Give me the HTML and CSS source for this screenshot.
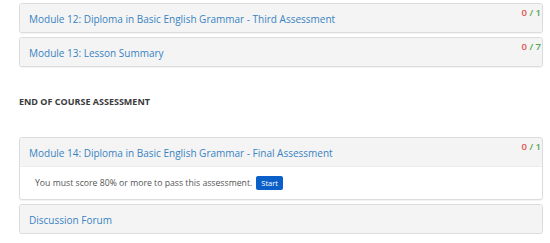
FILE: index.html
```html
<!DOCTYPE html>
<html>
<head>
<meta charset="utf-8">
<link rel="stylesheet" href="styles.css">
</head>
<body>
<div class="page">
  <div class="panel">
    <div class="panel-heading">
      <a class="title" href="#">Module 12: Diploma in Basic English Grammar - Third Assessment</a>
      <span class="score"><span class="bad">0</span> <span class="good">/ 1</span></span>
    </div>
  </div>
  <div class="panel">
    <div class="panel-heading">
      <a class="title" href="#">Module 13: Lesson Summary</a>
      <span class="score"><span class="bad">0</span> <span class="good">/ 7</span></span>
    </div>
  </div>

  <h4 class="section">END OF COURSE ASSESSMENT</h4>

  <div class="panel">
    <div class="panel-heading">
      <a class="title" href="#">Module 14: Diploma in Basic English Grammar - Final Assessment</a>
      <span class="score"><span class="bad">0</span> <span class="good">/ 1</span></span>
    </div>
    <div class="panel-body">
      You must score 80% or more to pass this assessment. <a class="btn" href="#">Start</a>
    </div>
  </div>
  <div class="panel">
    <div class="panel-heading">
      <a class="title" href="#">Discussion Forum</a>
    </div>
  </div>
</div>
</body>
</html>
```
FILE: styles.css
```css
html, body {
  margin: 0;
  padding: 0;
  background: #fff;
}
body {
  font-family: "Open Sans", "Noto Sans", sans-serif;
  font-size: 10px;
  color: #444;
}
.page {
  width: 524px;
  padding: 3px 0 0 19px;
  display: flex;
  flex-direction: column;
  gap: 4px;
}
.panel {
  border: 1px solid #dcdcdc;
  border-radius: 3px;
  background: #fff;
  box-shadow: 0 1px 1px rgba(0,0,0,0.05);
}
.panel-heading {
  position: relative;
  background: #f4f4f4;
  height: 28px;
  padding: 0 9px;
  display: flex;
  align-items: center;
  border-radius: 3px;
}
.panel-body {
  border-top: 1px solid #ececec;
  height: 32px;
  padding: 0 15px;
  display: flex;
  align-items: center;
  color: #555;
  font-size: 8.7px;
}
.title {
  color: #3883c2;
  text-decoration: none;
  font-size: 10px;
  padding-top: 1px;
}
.score {
  position: absolute;
  top: 2px;
  right: 1px;
  font-size: 9.5px;
  font-weight: 600;
}
.bad { color: #e0524e; }
.good { color: #53a653; }
.section {
  margin: 25px 0 25px 0;
  font-size: 9px;
  line-height: 12px;
  font-weight: 700;
  color: #3a3a3a;
}
.btn {
  display: inline-block;
  margin-left: 4px;
  background: #0b5fc8;
  color: #fff;
  font-size: 7.5px;
  text-decoration: none;
  padding: 3px 5px 3px;
  border-radius: 2px;
  line-height: 8px;
}
```
